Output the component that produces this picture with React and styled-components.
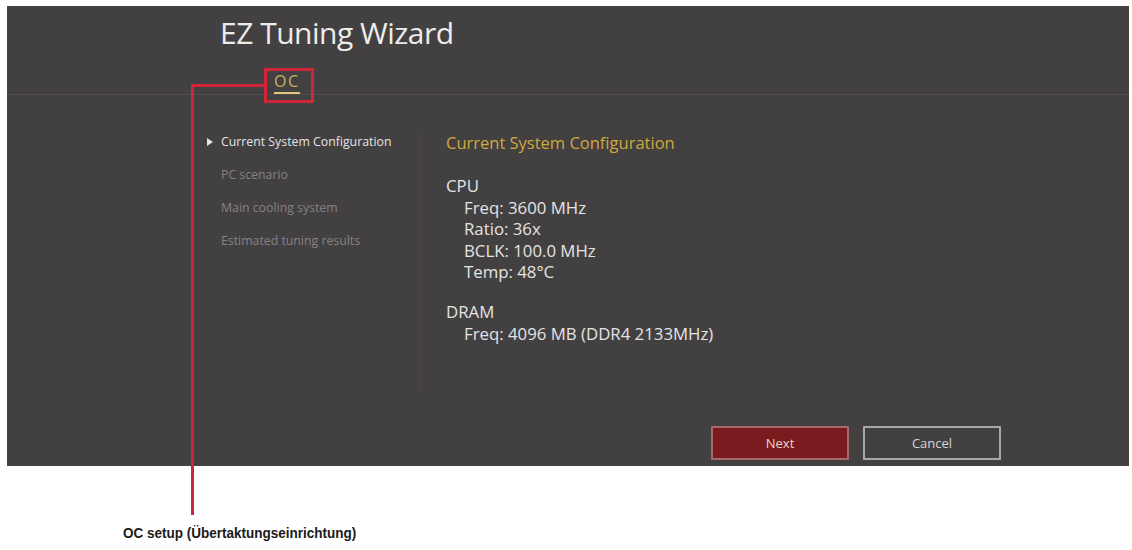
import React from "react";
import styled, { createGlobalStyle } from "styled-components";

const Global = createGlobalStyle`
  html, body { margin: 0; padding: 0; background: #ffffff; }
  body { font-family: "Open Sans", "DejaVu Sans", sans-serif; }
  * { box-sizing: border-box; }
`;

const Page = styled.div`
  position: relative;
  width: 1132px;
  height: 550px;
  padding: 6px 3px 0 7px;
  overflow: hidden;
`;

const Panel = styled.div`
  width: 1122px;
  height: 460px;
  background: #434041;
  display: flex;
  flex-direction: column;
`;

const Header = styled.header`
  height: 89px;
  border-bottom: 1px solid #524e4f;
  padding: 7px 0 0 213px;
  display: flex;
  flex-direction: column;
`;

const Title = styled.h1`
  margin: 0;
  font-family: "Open Sans", sans-serif;
  font-weight: 400;
  font-size: 30px;
  line-height: 40px;
  color: #ececec;
  letter-spacing: -0.5px;
`;

const Tabs = styled.nav`
  display: flex;
  padding-left: 54px;
  margin-top: 18px;
`;

const Tab = styled.span`
  font-size: 16px;
  line-height: 20px;
  letter-spacing: 1.5px;
  color: ${(p) => (p.$active ? "#c9b066" : "#9a9a9a")};
  padding: 0 0 1px;
  border-bottom: 2px solid ${(p) => (p.$active ? "#dcc77a" : "transparent")};
`;

const Body = styled.div`
  flex: 1;
  display: flex;
  padding: 30px 0 0 200px;
`;

const Nav = styled.ul`
  list-style: none;
  margin: 0;
  padding: 0;
  width: 213px;
`;

const NavItem = styled.li`
  display: flex;
  align-items: center;
  height: 33px;
  font-size: 12.3px;
  white-space: nowrap;
  color: ${(p) => (p.$active ? "#e4e4e4" : "#858283")};
  padding-left: ${(p) => (p.$active ? "0" : "14px")};
`;

const Arrow = styled.span`
  width: 0;
  height: 0;
  border-top: 4px solid transparent;
  border-bottom: 4px solid transparent;
  border-left: 6px solid #e4e4e4;
  margin-right: 8px;
`;

const Content = styled.section`
  margin-top: 8px;
  height: 260px;
  border-left: 1px solid #4e4a4b;
  padding-left: 25px;
  color: #e4e4e4;
  font-size: 16.8px;
`;

const Heading = styled.h2`
  margin: 0 0 22px;
  font-weight: 400;
  font-size: 16.5px;
  line-height: 20px;
  color: #cfa93c;
`;

const Group = styled.div`
  margin-bottom: 18.5px;
`;

const Line = styled.div`
  line-height: 21.5px;
  padding-left: ${(p) => (p.$indent ? "18px" : "0")};
`;

const Footer = styled.footer`
  display: flex;
  justify-content: flex-end;
  gap: 14px;
  padding: 0 128px 6px 0;
`;

const Button = styled.button`
  width: 138px;
  height: 34px;
  font-family: "Open Sans", sans-serif;
  font-size: 13px;
  color: ${(p) => (p.$primary ? "#e8d6d6" : "#d4d4d4")};
  background: ${(p) => (p.$primary ? "#7a1c1f" : "transparent")};
  border: 2px solid ${(p) => (p.$primary ? "#a56a6c" : "#a9a7a8")};
  border-radius: 1px;
  padding: 0;
`;

const CalloutBox = styled.div`
  position: absolute;
  left: 264px;
  top: 68px;
  width: 50px;
  height: 35px;
  border: 3px solid #d12638;
`;

const CalloutH = styled.div`
  position: absolute;
  left: 191px;
  top: 84px;
  width: 73px;
  height: 3px;
  background: #d12638;
`;

const CalloutV = styled.div`
  position: absolute;
  left: 191px;
  top: 84px;
  width: 3px;
  height: 431px;
  background: #c8283c;
`;

const Caption = styled.div`
  margin: 58px 0 0 116px;
  font-family: "Liberation Sans", Arial, sans-serif;
  font-weight: 700;
  font-size: 15px;
  line-height: 18px;
  color: #1a1a1a;
  transform: scaleX(0.9);
  transform-origin: left center;
  white-space: nowrap;
`;

export default function App() {
  return (
    <>
      <Global />
      <Page>
        <Panel>
          <Header>
            <Title>EZ Tuning Wizard</Title>
            <Tabs>
              <Tab $active>OC</Tab>
            </Tabs>
          </Header>
          <Body>
            <Nav>
              <NavItem $active>
                <Arrow />
                Current System Configuration
              </NavItem>
              <NavItem>PC scenario</NavItem>
              <NavItem>Main cooling system</NavItem>
              <NavItem>Estimated tuning results</NavItem>
            </Nav>
            <Content>
              <Heading>Current System Configuration</Heading>
              <Group>
                <Line>CPU</Line>
                <Line $indent>Freq: 3600 MHz</Line>
                <Line $indent>Ratio: 36x</Line>
                <Line $indent>BCLK: 100.0 MHz</Line>
                <Line $indent>Temp: 48°C</Line>
              </Group>
              <Group>
                <Line>DRAM</Line>
                <Line $indent>Freq: 4096 MB (DDR4 2133MHz)</Line>
              </Group>
            </Content>
          </Body>
          <Footer>
            <Button $primary>Next</Button>
            <Button>Cancel</Button>
          </Footer>
        </Panel>
        <Caption>OC setup (Übertaktungseinrichtung)</Caption>
        <CalloutV />
        <CalloutH />
        <CalloutBox />
      </Page>
    </>
  );
}
